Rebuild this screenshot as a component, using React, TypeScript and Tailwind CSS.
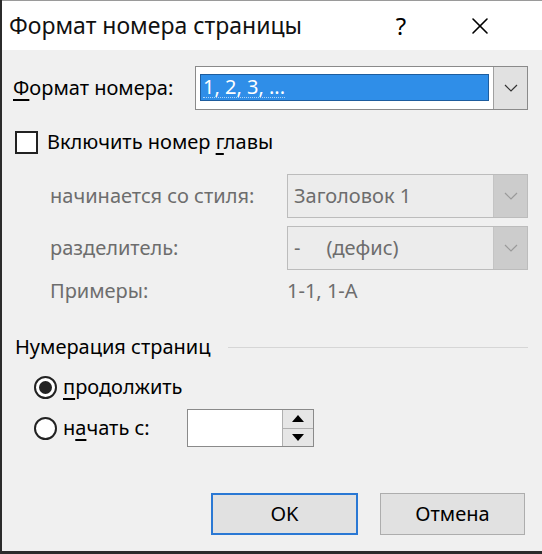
import { X } from 'lucide-react';

const font = { fontFamily: '"Noto Sans", "Open Sans", sans-serif' };

function Chevron({ disabled }: { disabled?: boolean }) {
  return (
    <svg width="14" height="8" viewBox="0 0 14 8" fill="none">
      <path d="M1 1 L7 7 L13 1" stroke={disabled ? '#9a9a9a' : '#333'} strokeWidth="1.2" />
    </svg>
  );
}

function Combo({ value, disabled, selected }: { value: string; disabled?: boolean; selected?: boolean }) {
  return (
    <div
      className={`flex h-[44px] border ${
        disabled ? 'border-[#bcbcbc] bg-[#ececec]' : 'border-[#8a8a8a] bg-white'
      }`}
    >
      <div className="flex-1 flex items-center px-[4px]">
        {selected ? (
          <div className="w-full h-[27px] bg-[#2f8ee8] border border-[#1e5d9e] flex items-center px-[2px] text-white text-[20px] leading-none">
            <span className="border-b border-dotted border-white/60">{value}</span>
          </div>
        ) : (
          <span className={`text-[20px] pl-[2px] whitespace-pre ${disabled ? 'text-[#6d6d6d]' : 'text-black'}`}>{value}</span>
        )}
      </div>
      <div
        className={`w-[34px] flex items-center justify-center border-l ${
          disabled ? 'bg-[#cccccc] border-[#c4c4c4]' : 'bg-[#e1e1e1] border-[#a0a0a0]'
        }`}
      >
        <Chevron disabled={disabled} />
      </div>
    </div>
  );
}

function Radio({ checked }: { checked?: boolean }) {
  return (
    <div className="w-[23px] h-[23px] rounded-full border-2 border-[#222] bg-white flex items-center justify-center">
      {checked && <div className="w-[13px] h-[13px] rounded-full bg-[#222]" />}
    </div>
  );
}

export default function App() {
  return (
    <div style={font} className="w-[542px] h-[554px] flex flex-col border-l-2 border-b-[3px] border-[#2b2b2b] bg-[#f0f0f0] text-black">
      {/* Title bar */}
      <div className="h-[50px] bg-white flex items-center border-t border-[#9a9a9a]">
        <span className="pl-[7px] text-[23px] text-[#111] flex-1">Формат номера страницы</span>
        <span className="text-[24px] w-[30px] text-center mr-[50px]">?</span>
        <X size={28} strokeWidth={1.4} className="mr-[48px]" />
      </div>

      {/* Body */}
      <div className="flex-1 flex flex-col pl-[11px] pr-[14px] text-[20px]">
        <div className="mt-[15px] flex items-center h-[45px]">
          <span className="w-[182px]">
            <span className="underline underline-offset-4">Ф</span>ормат номера:
          </span>
          <div className="flex-1">
            <Combo value="1, 2, 3, ..." selected />
          </div>
        </div>

        <div className="mt-[20px] flex items-center h-[24px]">
          <div className="w-[23px] h-[23px] border-2 border-[#222] bg-white ml-[2px]" />
          <span className="ml-[9px]">
            Включить номер <span className="underline underline-offset-4">г</span>лавы
          </span>
        </div>

        <div className="mt-[20px] flex items-center text-[#6d6d6d]">
          <span className="w-[274px] pl-[37px]">начинается со стиля:</span>
          <div className="flex-1">
            <Combo value="Заголовок 1" disabled />
          </div>
        </div>

        <div className="mt-[8px] flex items-center text-[#6d6d6d]">
          <span className="w-[274px] pl-[37px]">разделитель:</span>
          <div className="flex-1">
            <Combo value={'-     (дефис)'} disabled />
          </div>
        </div>

        <div className="mt-[8px] flex items-center h-[26px] text-[#6d6d6d]">
          <span className="w-[274px] pl-[37px]">Примеры:</span>
          <span>1-1, 1-А</span>
        </div>

        <div className="mt-[30px] flex items-center h-[26px]">
          <span className="pl-[2px]">Нумерация страниц</span>
          <div className="flex-1 ml-[18px] h-px bg-[#d6d6d6]" />
        </div>

        <div className="mt-[14px] flex items-center h-[26px] pl-[21px]">
          <Radio checked />
          <span className="ml-[6px]">
            <span className="underline underline-offset-4">п</span>родолжить
          </span>
        </div>

        <div className="mt-[9px] flex items-center h-[38px] pl-[21px]">
          <Radio />
          <span className="ml-[6px] w-[124px]">
            н<span className="underline underline-offset-4">а</span>чать с:
          </span>
          <div className="w-[127px] h-[38px] flex border border-[#8a8a8a] bg-white">
            <div className="flex-1" />
            <div className="w-[31px] flex flex-col border-l border-[#b0b0b0]">
              <div className="flex-1 bg-[#e6e6e6] flex items-center justify-center border-b border-[#b0b0b0]">
                <div className="w-0 h-0 border-l-[6px] border-r-[6px] border-b-[7px] border-l-transparent border-r-transparent border-b-black" />
              </div>
              <div className="flex-1 bg-[#e6e6e6] flex items-center justify-center">
                <div className="w-0 h-0 border-l-[6px] border-r-[6px] border-t-[7px] border-l-transparent border-r-transparent border-t-black" />
              </div>
            </div>
          </div>
        </div>

        <div className="mt-[46px] flex justify-end gap-[22px] pr-[3px]">
          <button className="w-[147px] h-[42px] border-2 border-[#2a78d4] bg-[#e1e1e1] text-[20px]">OK</button>
          <button className="w-[145px] h-[42px] border border-[#adadad] bg-[#e1e1e1] text-[20px]">Отмена</button>
        </div>
      </div>
    </div>
  );
}
